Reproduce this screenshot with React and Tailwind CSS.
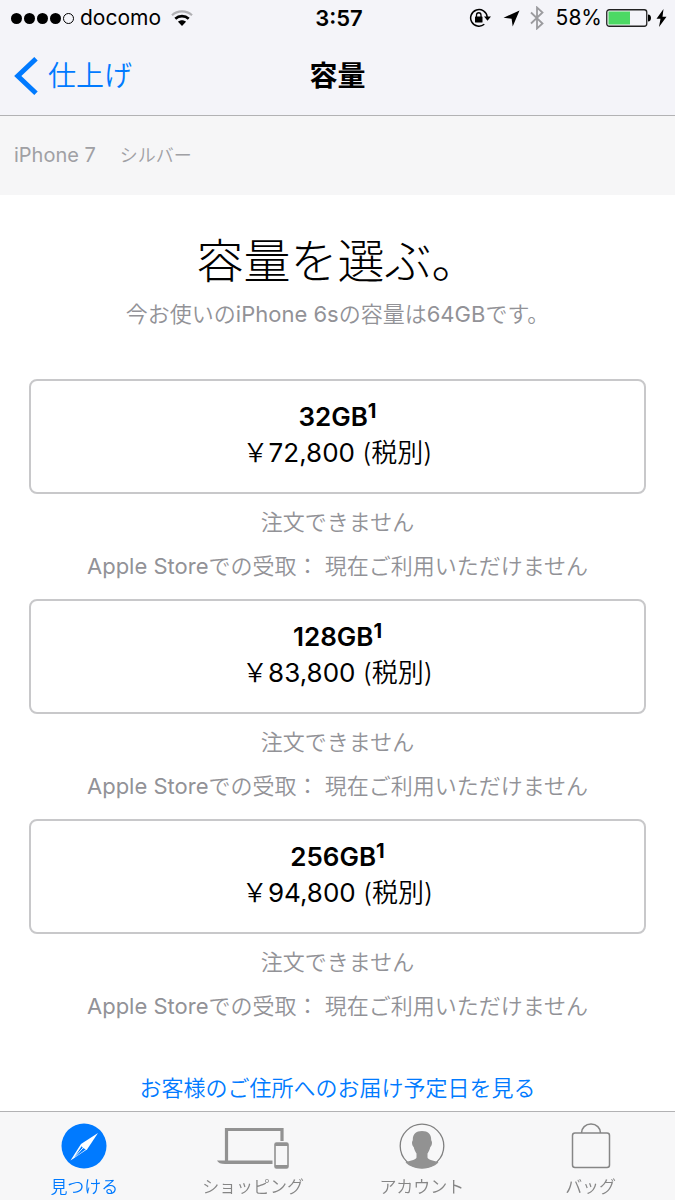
import React from 'react'

const models = [
    { size: '32GB', price: '72,800' },
    { size: '128GB', price: '83,800' },
    { size: '256GB', price: '94,800' },
]

const WifiIcon = () => (
    <svg width="22" height="17" viewBox="0 0 22 17" fill="none">
        <path d="M1 5.2C6.5 0 15.500 0 21 5.200" stroke="#b0b0b4" strokeWidth="2.2" />
        <path d="M4.300 8.800C8 5.200 14 5.200 17.700 8.800" stroke="#000" strokeWidth="2.600" />
        <path d="M11 16l-4-4.200c2.200-2 5.800-2 8 0z" fill="#000" />
    </svg>
)

const RotationLockIcon = () => (
    <svg width="22" height="20" viewBox="0 0 22 20" fill="none">
        <path d="M15.300 16.300A8.300 8.300 0 1 1 18.200 9" stroke="#000" strokeWidth="1.500" />
        <path d="M15 8.500h7l-3.500 4.300z" fill="#000" />
        <rect x="6" y="8.500" width="7.500" height="6" rx="0.600" fill="#000" />
        <path d="M7.500 9V7a2.250 2.250 0 0 1 4.500 0v2" stroke="#000" strokeWidth="1.300" />
    </svg>
)

const LocationIcon = () => (
    <svg width="17" height="17" viewBox="0 0 17 17">
        <path d="M16.500 0.500L9.700 16.500 8.600 8.800 0.500 7.800z" fill="#000" />
    </svg>
)

const BluetoothIcon = () => (
    <svg width="14" height="24" viewBox="0 0 14 24" fill="none" stroke="#9b9b9f" strokeWidth="1.800">
        <path d="M1 6.500l11.500 11L7 22.500v-21l5.500 5L1 17.500" />
    </svg>
)

const BatteryIcon = () => (
    <svg width="46" height="18" viewBox="0 0 46 18">
        <rect x="0.750" y="0.750" width="40" height="16.500" rx="2.500" fill="none" stroke="#222" strokeWidth="1.300" />
        <rect x="2.500" y="2.500" width="21.500" height="13" fill="#4cd964" />
        <path d="M42 5.500c4 0 4 7 0 7z" fill="#000" />
    </svg>
)

const BoltIcon = () => (
    <svg width="11" height="18" viewBox="0 0 11 18">
        <path d="M7.500 0L0.500 9.800h4L3 18l7.500-10.300h-4z" fill="#000" />
    </svg>
)

const CompassIcon = () => (
    <svg width="46" height="46" viewBox="0 0 46 46">
        <circle cx="23" cy="23" r="22.500" fill="#007aff" />
        <path d="M37 10L26.200 26.200 9.500 37.500 20 21z" fill="#fff" />
        <path d="M20.600 23.200l4 3.200L12.800 35z" fill="#007aff" />
        <path d="M22 24.900l-9.500 10.300" stroke="#fff" strokeWidth="0.900" />
        <circle cx="23.300" cy="23.600" r="2" fill="#fff" />
    </svg>
)

const DevicesIcon = () => (
    <svg width="72" height="46" viewBox="0 0 72 46" fill="none" stroke="#929292">
        <path d="M9.500 38V6.500h55.500v11.500" strokeWidth="3.200" />
        <path d="M0 37.500h55.500v3.500H8c-4 0-7-1-8-3.500z" fill="#929292" stroke="none" />
        <rect x="58" y="20" width="13" height="25" rx="1.500" strokeWidth="1.600" />
        <path d="M58 21.500h13M58 43.500h13" strokeWidth="3" />
    </svg>
)

const AccountIcon = () => (
    <svg width="46" height="46" viewBox="0 0 46 46">
        <circle cx="23" cy="23" r="21.800" fill="none" stroke="#808080" strokeWidth="1.300" />
        <path
            d="M23 8c6 0 9.200 3.300 9.200 8.800 0 1 .8 1.300.8 3 0 2.400-1 3.600-1.700 4.200-.6 3-1.800 5-2.800 6.500v4c0 2.500 7.500 3 11 5C35.300 43.500 29.500 45.500 23 45.500S10.700 43.500 6.500 39.500c3.500-2 11-2.500 11-5v-4c-1-1.500-2.200-3.500-2.800-6.500-.7-.6-1.700-1.800-1.700-4.200 0-1.700.8-2 .8-3C13.800 11.300 17 8 23 8z"
            fill="#929292"
        />
    </svg>
)

const BagIcon = () => (
    <svg width="40" height="46" viewBox="0 0 40 46" fill="none" stroke="#868686" strokeWidth="1.500">
        <rect x="1.500" y="10" width="37" height="34.500" rx="2.500" />
        <path d="M10.500 10c0-5 4-9 9.500-9s9.500 4 9.500 9" />
    </svg>
)

const tabs = [
    { label: '見つける', icon: CompassIcon, active: true },
    { label: 'ショッピング', icon: DevicesIcon },
    { label: 'アカウント', icon: AccountIcon },
    { label: 'バッグ', icon: BagIcon },
]

const StatusBar = () => (
    <div className="grid h-9 grid-cols-[1fr_auto_1fr] items-center pl-[11px] pr-2 text-[22px] text-black">
        <div className="flex items-center">
            <div className="flex gap-[2px]">
                {[0, 1, 2, 3].map(dot => (
                    <span key={dot} className="size-[11px] rounded-full bg-black" />
                ))}
                <span className="size-[11px] rounded-full border border-black" />
            </div>
            <span className="ml-[6px] mr-[10px] text-[21px]">docomo</span>
            <WifiIcon />
        </div>
        <span className="font-semibold">3:57</span>
        <div className="flex items-center justify-end">
            <RotationLockIcon />
            <span className="ml-3"><LocationIcon /></span>
            <span className="ml-[10px] mr-3"><BluetoothIcon /></span>
            <span className="mr-1 text-[21px]">58%</span>
            <BatteryIcon />
            <span className="ml-1"><BoltIcon /></span>
        </div>
    </div>
)

const CapacityOption = ({ size, price }) => (
    <li className="pb-[11px] text-center">
        <button
            type="button"
            className="block h-[115px] w-full rounded-lg border-2 border-[#c8c8ca] pb-1 text-[26px] leading-9 text-black"
        >
            <span className="block font-semibold">
                {size}<sup className="top-[-8px] text-[20px] font-bold leading-none">1</sup>
            </span>
            <span className="block">
                ￥<span className="font-normal">{price}</span> (税別)
            </span>
        </button>
        <div className="pt-[6px] text-[22px] leading-[44px] text-[#929297]">
            <p>注文できません</p>
            <p>
                <span className="font-normal">Apple Store</span>での受取： 現在ご利用いただけません
            </p>
        </div>
    </li>
)

const App = () => {
    return (
        <div className="flex min-h-screen flex-col bg-white font-['Inter','Noto_Sans_CJK_JP',sans-serif] font-[350]">
            <header className="border-b border-[#b2b2b4] bg-[#f4f4f9] font-normal">
                <StatusBar />
                <nav className="grid h-[79px] grid-cols-[1fr_auto_1fr] items-center px-[14px] text-[28px]">
                    <a href="#" className="flex items-center gap-[10px] font-[350] text-[#007aff]">
                        <svg width="24" height="38" viewBox="0 0 24 38" fill="none">
                            <path d="M22 1.800L3.800 19 22 36.200" stroke="#007aff" strokeWidth="5" />
                        </svg>
                        仕上げ
                    </a>
                    <h1 className="font-semibold text-black">容量</h1>
                </nav>
            </header>

            <div className="flex items-baseline gap-6 bg-[#f6f6f7] px-[14px] text-[18px] leading-[79px] text-[#a0a0a4]">
                <span className="text-[20px] font-normal">iPhone 7</span>
                <span>シルバー</span>
            </div>

            <main className="grow px-[29px] pt-8 text-center">
                <h2 className="text-[47px] font-light leading-[68px] text-black">容量を選ぶ。</h2>
                <p className="text-[22px] leading-[38px] text-[#929297]">
                    今お使いの<span className="font-normal">iPhone 6s</span>の容量は<span className="font-normal">64GB</span>です。
                </p>

                <ul className="mt-[46px]">
                    {models.map(model => (
                        <CapacityOption key={model.size} size={model.size} price={model.price} />
                    ))}
                </ul>

                <a href="#" className="mt-7 inline-block text-[22px] leading-[42px] text-[#007aff]">
                    お客様のご住所へのお届け予定日を見る
                </a>
            </main>

            <footer className="sticky bottom-0 border-t border-[#b2b2b4] bg-[#f7f7f8]">
                <nav className="grid h-[88px] grid-cols-4">
                    {tabs.map(({ label, icon: Icon, active }) => (
                        <a
                            key={label}
                            href="#"
                            className={`flex flex-col items-center gap-[6px] pt-[11px] text-[17px] ${active ? 'text-[#007aff]' : 'text-[#868686]'}`}
                        >
                            <Icon />
                            <span>{label}</span>
                        </a>
                    ))}
                </nav>
            </footer>
        </div>
    )
}

export default App
